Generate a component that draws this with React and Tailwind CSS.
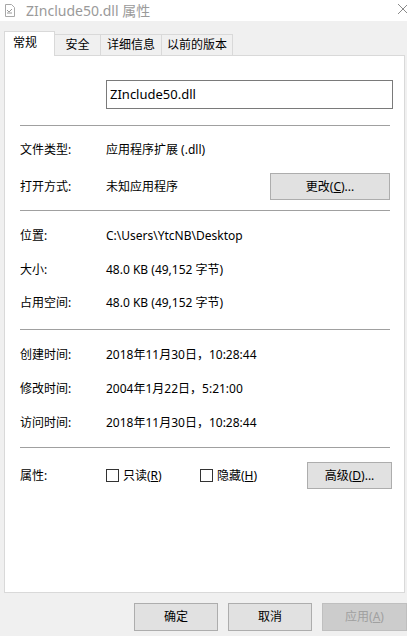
const FONT = { fontFamily: '"Noto Sans", "Noto Sans CJK SC", sans-serif' }

function Sep() {
  return <div className="ml-[15px] w-[370px] h-px bg-[#a0a0a0]" />
}

function Row({ label, value, mt, children }) {
  return (
    <div className="flex items-center" style={{ marginTop: mt }}>
      <div className="w-[101px] pl-[15px] shrink-0 leading-[20px]">{label}</div>
      <div className="leading-[20px]">{value}</div>
      {children}
    </div>
  )
}

function Btn({ children, className = '' }) {
  return (
    <div className={`flex items-center justify-center bg-[#e1e1e1] border border-[#adadad] text-[12px] ${className}`}>
      {children}
    </div>
  )
}

function Check({ children }) {
  return (
    <div className="flex items-center gap-[4px]">
      <div className="w-[13px] h-[13px] border border-[#333] bg-white" />
      <span>{children}</span>
    </div>
  )
}

export default function App() {
  return (
    <div className="w-[407px] h-[636px] bg-[#f0f0f0] overflow-hidden text-[12px] text-black" style={FONT}>
      {/* title bar */}
      <div className="h-[21px] bg-white flex items-center relative">
        <svg width="12" height="13" viewBox="0 0 12 13" className="ml-[4px]">
          <path d="M1.5 0.5h6l3 3v9h-9z" fill="#fff" stroke="#a8a8a8" />
          <path d="M3 6l2 2 3-3M3 9h5" stroke="#9a9a9a" fill="none" />
        </svg>
        <span className="ml-[10px] text-[14px] text-[#9a9a9a] leading-none">ZInclude50.dll 属性</span>
        <svg width="12" height="12" viewBox="0 0 12 12" className="absolute left-[397px] top-[3px]">
          <path d="M1 1l10 10M11 1L1 11" stroke="#8a8a8a" strokeWidth="1" />
        </svg>
      </div>

      {/* tabs */}
      <div className="flex items-end pl-[4px] pt-[10px] relative z-10 -mb-px">
        <div className="h-[25px] w-[51px] bg-white border border-b-0 border-[#d9d9d9] flex items-center pl-[8px] pb-[2px]">常规</div>
        <div className="h-[22px] w-[46px] bg-[#f0f0f0] border border-l-0 border-[#d9d9d9] flex items-center justify-center">安全</div>
        <div className="h-[22px] w-[61px] bg-[#f0f0f0] border border-l-0 border-[#d9d9d9] flex items-center justify-center">详细信息</div>
        <div className="h-[22px] w-[71px] bg-[#f0f0f0] border border-l-0 border-[#d9d9d9] flex items-center justify-center">以前的版本</div>
      </div>

      {/* panel */}
      <div className="ml-[4px] w-[401px] h-[538px] bg-white border border-[#d9d9d9]">
        <div className="ml-[101px] mt-[24px] w-[287px] h-[29px] border border-[#7a7a7a] flex items-center pl-[3px] text-[13px]">
          ZInclude50.dll
        </div>
        <div className="mt-[16px]"><Sep /></div>

        <Row label="文件类型:" value="应用程序扩展 (.dll)" mt={14} />
        <div className="flex items-center mt-[13px]">
          <div className="w-[101px] pl-[15px] shrink-0">打开方式:</div>
          <div className="w-[164px]">未知应用程序</div>
          <Btn className="w-[120px] h-[27px]">更改(<u>C</u>)...</Btn>
        </div>
        <div className="mt-[10px]"><Sep /></div>

        <Row label="位置:" value="C:\Users\YtcNB\Desktop" mt={15} />
        <Row label="大小:" value="48.0 KB (49,152 字节)" mt={14} />
        <Row label="占用空间:" value="48.0 KB (49,152 字节)" mt={13} />
        <div className="mt-[16px]"><Sep /></div>

        <Row label="创建时间:" value="2018年11月30日，10:28:44" mt={15} />
        <Row label="修改时间:" value="2004年1月22日，5:21:00" mt={14} />
        <Row label="访问时间:" value="2018年11月30日，10:28:44" mt={14} />
        <div className="mt-[14px]"><Sep /></div>

        <div className="flex items-center mt-[14px]">
          <div className="w-[101px] pl-[15px] shrink-0">属性:</div>
          <div className="w-[94px]"><Check>只读(<u>R</u>)</Check></div>
          <div className="w-[107px]"><Check>隐藏(<u>H</u>)</Check></div>
          <Btn className="w-[85px] h-[27px]">高级(<u>D</u>)...</Btn>
        </div>
      </div>

      {/* bottom buttons */}
      <div className="flex gap-[10px] pl-[134px] mt-[10px]">
        <Btn className="w-[85px] h-[28px]">确定</Btn>
        <Btn className="w-[85px] h-[28px]">取消</Btn>
        <div className="w-[85px] h-[28px] shrink-0 flex items-center justify-center bg-[#cccccc] border border-[#bfbfbf] text-[#a0a0a0]">
          应用(<u>A</u>)
        </div>
      </div>
    </div>
  )
}
